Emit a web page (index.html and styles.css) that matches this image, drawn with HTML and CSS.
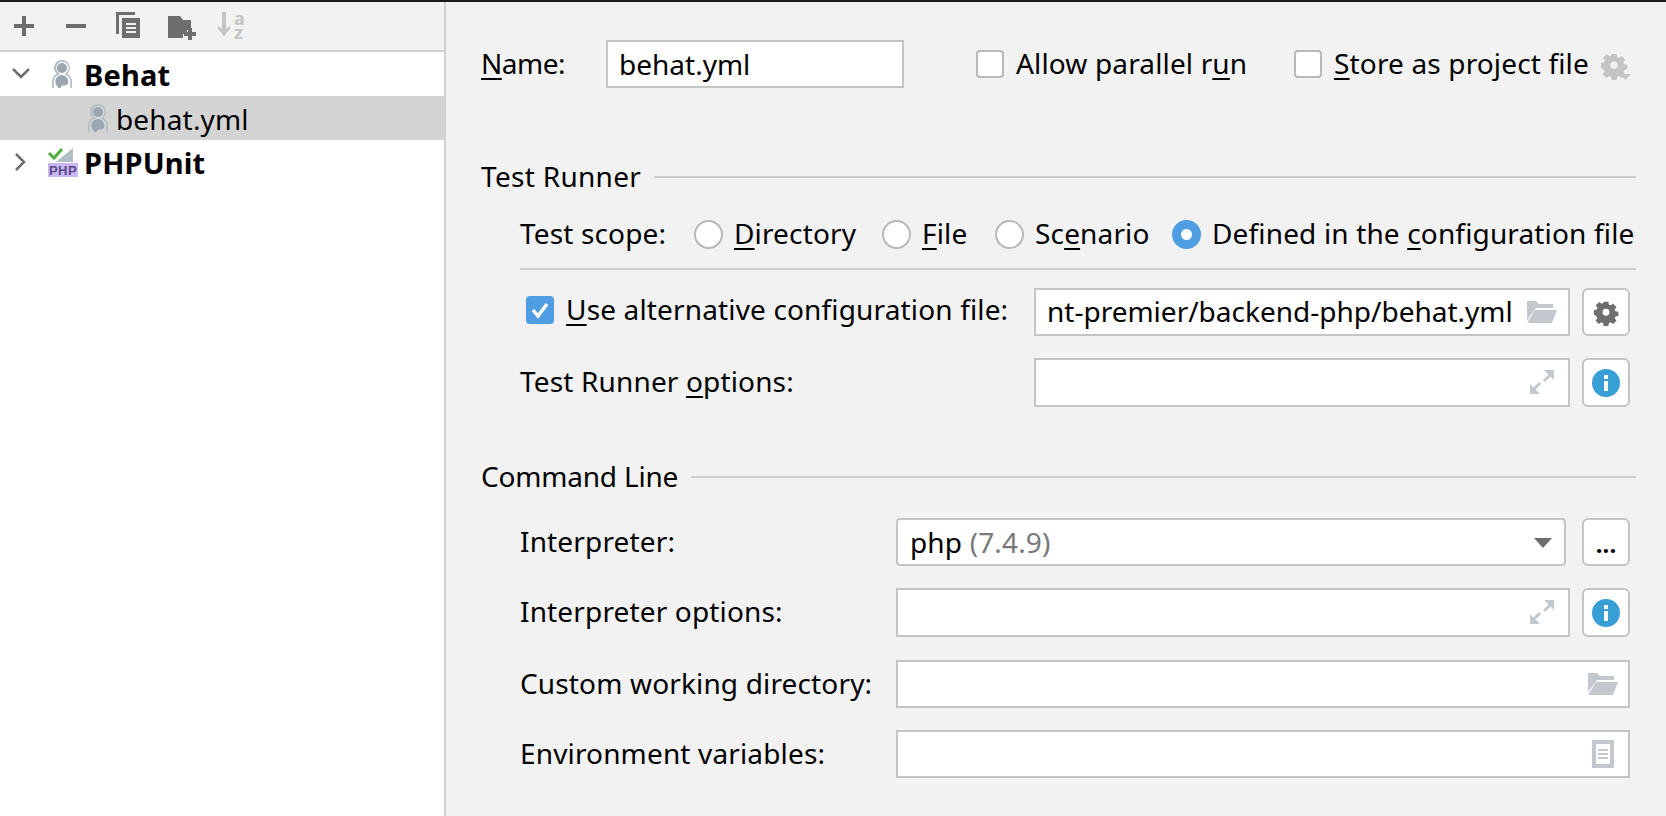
FILE: index.html
```html
<!DOCTYPE html>
<html lang="en">
<head>
    <meta charset="UTF-8">
    <meta name="viewport" content="width=device-width, initial-scale=1.0">
    <title>Run Configurations</title>
    <link rel="stylesheet" href="styles.css">
</head>
<body>
<svg class="defs" width="0" height="0">
    <symbol id="behat" viewBox="0 0 20 28">
        <path d="M10 0a8 8 0 0 1 5.500 13.800A10 10 0 0 1 20 22v6h-1.800v-6a8.200 8.200 0 0 0-5.200-7.600l1.200-1.500A6.200 6.200 0 1 0 7 13.100l1 1.200A8.200 8.200 0 0 0 1.800 22v6H0v-6a10 10 0 0 1 4.500-8.200A8 8 0 0 1 10 0z" fill="#b4bfc6"/>
        <circle cx="10" cy="8" r="5" fill="#9aa7b0"/>
        <path d="M6.500 28l-1-1.500A6.500 6.500 0 1 1 15.800 24c-1.500 1.300-3 1.500-4.500 1.600-1.400.1-2.300.7-2.600 2.400z" fill="#9aa7b0"/>
    </symbol>
    <symbol id="folder" viewBox="0 0 30 22">
        <path d="M0 0h9l3 3h14v4H9L0 19z" fill="#c2c8cd"/>
        <path d="M8 9h22l-5 13H0z" fill="#c2c8cd"/>
    </symbol>
    <symbol id="expand" viewBox="0 0 24 24">
        <path d="M14 0h10v10l-3.500-3.500-5.500 5.500-2-2 5.500-5.500zM0 24V14l3.500 3.500L9 12l2 2-5.500 5.500L10 24z" fill="#c2c8cd"/>
    </symbol>
    <symbol id="info" viewBox="0 0 28 28">
        <circle cx="14" cy="14" r="14" fill="#389fd6"/>
        <rect x="12" y="6" width="4" height="4" fill="#fff"/>
        <rect x="12" y="12" width="4" height="10" fill="#fff"/>
    </symbol>
    <symbol id="gear" viewBox="0 0 24 24">
        <path d="M9.500 1h5l.7 3.200 1.700.7 2.800-1.800 3.500 3.500-1.800 2.800.7 1.700 3.200.7v4.400l-3.200.7-.7 1.700 1.800 2.800-3.500 3.500-2.800-1.800-1.700.7-.7 3.200h-5l-.7-3.200-1.700-.7-2.800 1.800-3.500-3.500 1.800-2.800-.7-1.700L-1 14.400V10l3.200-.7.700-1.700-1.800-2.800 3.500-3.500 2.800 1.800 1.700-.7zM12 8.500a3.700 3.700 0 1 0 0 7.400 3.700 3.700 0 0 0 0-7.400z" transform="translate(2.400 2.400) scale(.8)" fill-rule="evenodd"/>
    </symbol>
</svg>

<div class="window">
    <div class="sidebar">
        <div class="toolbar">
            <svg class="tool" width="32" height="32" viewBox="0 0 32 32"><path d="M14 6h4v8h8v4h-8v8h-4v-8H6v-4h8z" fill="#6e6e6e"/></svg>
            <svg class="tool" width="32" height="32" viewBox="0 0 32 32"><rect x="6" y="14" width="20" height="4" fill="#6e6e6e"/></svg>
            <svg class="tool" width="32" height="32" viewBox="0 0 32 32"><path d="M4 2h19v3H7v19H4z M10 8h18v20H10z" fill="#6e6e6e"/><path d="M14 13h10v2H14zM14 17h10v2H14zM14 21h10v2H14z" fill="#f2f2f2"/></svg>
            <svg class="tool tool-folder" width="32" height="32" viewBox="0 0 32 32"><path d="M2 6h12l3 4h8v10h-4v4h-4v4H2z" fill="#6e6e6e"/><path d="M22 21h4v4h4v4h-4v4h-4v-4h-4v-4h4z" fill="#6e6e6e" transform="translate(0 -3)"/></svg>
            <div class="sort-icon">
                <svg width="18" height="26" viewBox="0 0 18 26"><path d="M7 0h4v17l4-3v3l-6 7-6-7v-3l4 3z" fill="#c4c4c4"/></svg>
                <div class="sort-letters"><span>a</span><span>z</span></div>
            </div>
        </div>
        <div class="tree">
            <div class="tree-row">
                <svg class="chevron" width="20" height="12" viewBox="0 0 20 12"><path d="M2 2l8 8 8-8" fill="none" stroke="#6e6e6e" stroke-width="2.500"/></svg>
                <svg class="tree-icon" width="20" height="28"><use href="#behat"/></svg>
                <b>Behat</b>
            </div>
            <div class="tree-row selected">
                <svg class="tree-icon file-icon" width="20" height="28"><use href="#behat"/></svg>
                <span>behat.yml</span>
            </div>
            <div class="tree-row">
                <svg class="chevron right" width="12" height="20" viewBox="0 0 12 20"><path d="M2 2l8 8-8 8" fill="none" stroke="#6e6e6e" stroke-width="2.500"/></svg>
                <svg class="php-icon" width="32" height="34" viewBox="0 0 32 34">
                    <path d="M26 3v14H9z" fill="#b0bec5"/>
                    <path d="M2 8l5 5 8-9" fill="none" stroke="#4fb03a" stroke-width="3"/>
                    <rect x="1" y="18" width="30" height="14" fill="#c9b8f0"/>
                    <text x="16" y="30" class="php-text">PHP</text>
                </svg>
                <b>PHPUnit</b>
            </div>
        </div>
    </div>

    <div class="main">
        <div class="name-row">
            <label class="name-label"><u>N</u>ame:</label>
            <div class="field name-field">behat.yml</div>
            <span class="check check-parallel"><i class="box"></i><span>Allow parallel r<u>u</u>n</span></span>
            <span class="check check-store"><i class="box"></i><span><u>S</u>tore as project file</span></span>
            <svg class="store-gear" width="30" height="31" viewBox="0 0 30 31">
                <svg x="-2" width="30" height="30" fill="#c4c4c4"><use href="#gear"/></svg>
                <path d="M19 24h11l-5.500 6z" fill="#c4c4c4"/>
            </svg>
        </div>

        <div class="group-title title-runner"><span>Test Runner</span><i></i></div>

        <div class="scope-row">
            <span class="scope-label">Test scope:</span>
            <span class="radio r-dir"><i></i><span><u>D</u>irectory</span></span>
            <span class="radio r-file"><i></i><span><u>F</u>ile</span></span>
            <span class="radio r-scen"><i></i><span>Sc<u>e</u>nario</span></span>
            <span class="radio on"><i></i><span>Defined in the <u>c</u>onfiguration file</span></span>
        </div>
        <div class="separator"></div>

        <div class="form-row row-alt">
            <span class="check alt-check"><i class="box checked"><svg width="20" height="20" viewBox="0 0 20 20"><path d="M3 10l5 6 9-12" fill="none" stroke="#fff" stroke-width="3.500"/></svg></i><span><u>U</u>se alternative configuration file:</span></span>
            <div class="field grow clip"><span class="clip-text">nt-premier/backend-php/behat.yml</span><svg class="inner-icon folder-alt" width="30" height="22"><use href="#folder"/></svg></div>
            <div class="side-btn"><svg width="28" height="28" fill="#6e6e6e"><use href="#gear"/></svg></div>
        </div>
        <div class="form-row row-tall">
            <span class="label wide">Test Runner <u>o</u>ptions:</span>
            <div class="field grow"><svg class="inner-icon expand-icon" width="24" height="24"><use href="#expand"/></svg></div>
            <div class="side-btn"><svg width="28" height="28"><use href="#info"/></svg></div>
        </div>

        <div class="group-title title-command"><span>Command Line</span><i></i></div>

        <div class="form-row row-interp">
            <span class="label">Interpreter:</span>
            <div class="combo">php <span class="muted">(7.4.9)</span><i class="arrow"></i></div>
            <div class="side-btn dots">...</div>
        </div>
        <div class="form-row row-tall">
            <span class="label">Interpreter options:</span>
            <div class="field grow"><svg class="inner-icon expand-icon" width="24" height="24"><use href="#expand"/></svg></div>
            <div class="side-btn"><svg width="28" height="28"><use href="#info"/></svg></div>
        </div>
        <div class="form-row row-interp">
            <span class="label">Custom working directory:</span>
            <div class="field grow"><svg class="inner-icon folder-right" width="30" height="22"><use href="#folder"/></svg></div>
        </div>
        <div class="form-row row-env">
            <span class="label">Environment variables:</span>
            <div class="field grow">
                <svg class="inner-icon env-icon" width="22" height="28" viewBox="0 0 22 28"><path d="M0 0h22v28H0zM4 4v20h14V4z" fill="#c2c8cd" fill-rule="evenodd"/><path d="M6 9h10v2H6zM6 13h10v2H6zM6 17h10v2H6z" fill="#c2c8cd"/></svg>
            </div>
        </div>
    </div>
</div>
</body>
</html>
```

FILE: styles.css
```css
body {
    margin: 0;
    font-family: "Noto Sans", sans-serif;
    font-size: 28px;
    line-height: 36px;
    letter-spacing: 0.15px;
    color: #000;
    background: #f2f2f2;
    overflow: hidden;
}
u {
    text-decoration-thickness: 2px;
    text-underline-offset: 4px;
}
.defs {
    position: absolute;
}
.window {
    display: flex;
    height: 814px;
    border-top: 2px solid #1a1a1a;
}

/* left tree */
.sidebar {
    width: 444px;
    flex: none;
    background: #fff;
    border-right: 2px solid #d1d1d1;
}
.toolbar {
    display: flex;
    align-items: center;
    height: 48px;
    padding-left: 8px;
    gap: 20px;
    background: #f2f2f2;
    border-bottom: 2px solid #d1d1d1;
}
.tool {
    flex: none;
}
.tool-folder {
    margin-left: 2px;
    margin-right: -2px;
}
.sort-icon {
    display: flex;
    align-items: flex-start;
    height: 28px;
    margin-left: -1px;
    gap: 1px;
}
.sort-letters {
    display: flex;
    flex-direction: column;
    margin-top: -1px;
    font-size: 18px;
    font-weight: 700;
    line-height: 14px;
    color: #c4c4c4;
}
.tree-row {
    display: flex;
    align-items: center;
    height: 44px;
    padding-left: 52px;
    position: relative;
}
.tree-row b {
    margin: 2px 0 0 12px;
    font-size: 29px;
}
.tree-row.selected {
    background: #d4d4d4;
    padding-left: 88px;
}
.tree-row.selected span {
    margin: 1px 0 0 8px;
}
.chevron {
    position: absolute;
    left: 11px;
    top: 15px;
}
.chevron.right {
    left: 14px;
    top: 12px;
}
.php-icon {
    margin-left: -5px;
    margin-right: -7px;
}
.php-text {
    font-family: "Liberation Sans", sans-serif;
    font-size: 13px;
    font-weight: 700;
    letter-spacing: 0.5px;
    text-anchor: middle;
    fill: #5b4a8a;
}

/* right form */
.main {
    flex: 1;
    padding: 38px 30px 0 35px;
}
.name-row {
    display: flex;
    align-items: center;
    height: 48px;
}
.name-label {
    width: 125px;
    flex: none;
    margin-top: -3px;
    letter-spacing: -0.5px;
}
.field {
    display: flex;
    align-items: center;
    box-sizing: border-box;
    height: 100%;
    background: #fff;
    border: 2px solid #c4c4c4;
    position: relative;
}
.name-field {
    width: 298px;
    flex: none;
    padding-left: 11px;
    letter-spacing: 0;
}
.check {
    display: flex;
    align-items: center;
    flex: none;
    white-space: nowrap;
}
.check > span {
    margin-top: -3px;
}
.box {
    display: flex;
    align-items: center;
    justify-content: center;
    box-sizing: border-box;
    width: 28px;
    height: 28px;
    margin-right: 12px;
    flex: none;
    background: #fff;
    border: 2px solid #b8b8b8;
    border-radius: 4px;
}
.box.checked {
    background: #4f9ee3;
    border: none;
}
.check-parallel {
    margin-left: 72px;
    width: 318px;
}
.check-store {
    width: 307px;
}
.store-gear {
    flex: none;
    margin-top: 2px;
}
.group-title {
    display: flex;
    align-items: center;
    height: 36px;
}
.group-title span {
    margin-top: -3px;
}
.group-title i {
    flex: 1;
    height: 2px;
    margin-left: 13px;
    background: #cdcdcd;
}
.title-runner {
    margin-top: 71px;
    letter-spacing: 0.3px;
}
.title-command {
    margin-top: 52px;
    letter-spacing: -0.2px;
}
.scope-row {
    display: flex;
    align-items: center;
    height: 30px;
    margin: 24px 0 0 39px;
    white-space: nowrap;
}
.scope-label {
    width: 174px;
    flex: none;
    margin-top: -3px;
}
.radio {
    display: flex;
    align-items: center;
    flex: none;
}
.radio > span {
    margin-top: -3px;
}
.radio i {
    box-sizing: border-box;
    width: 29px;
    height: 29px;
    margin-right: 11px;
    flex: none;
    background: #fff;
    border: 2px solid #b8b8b8;
    border-radius: 50%;
}
.radio.on i {
    background: #fff;
    border: 9.500px solid #4f9ee3;
}
.r-dir { width: 188px; }
.r-file { width: 113px; }
.r-scen { width: 177px; }
.separator {
    height: 2px;
    margin: 19px 0 0 39px;
    background: #cdcdcd;
}
.form-row {
    display: flex;
    align-items: center;
    margin-left: 39px;
    margin-right: 6px;
    margin-top: 22px;
}
.row-alt {
    height: 48px;
    margin-top: 18px;
}
.row-tall {
    height: 49px;
}
.row-interp {
    height: 48px;
    margin-top: 23px;
}
.row-env {
    height: 48px;
}
.alt-check {
    width: 514px;
    padding: 0 0 4px 6px;
    box-sizing: border-box;
}
.label {
    width: 376px;
    flex: none;
    white-space: nowrap;
    margin-top: -3px;
}
.label.wide {
    width: 514px;
}
.grow {
    flex: 1;
    min-width: 0;
}
.clip {
    overflow: hidden;
}
.clip-text {
    padding-left: 11px;
    margin-top: -2px;
    white-space: nowrap;
    letter-spacing: 0;
}
.inner-icon {
    position: absolute;
    right: 12px;
    top: 10px;
}
.expand-icon {
    right: 14px;
}
.folder-alt {
    top: 11px;
    right: 11px;
}
.folder-right {
    top: 11px;
    right: 10px;
}
.env-icon {
    right: 14px;
    top: 8px;
}
.side-btn {
    display: flex;
    align-items: center;
    justify-content: center;
    box-sizing: border-box;
    width: 48px;
    height: 100%;
    margin-left: 12px;
    flex: none;
    background: #fff;
    border: 2px solid #c4c4c4;
    border-radius: 6px;
}
.dots {
    align-items: flex-end;
    padding-bottom: 8px;
    font-size: 24px;
    font-weight: 700;
    line-height: 1;
}
.combo {
    display: flex;
    align-items: center;
    box-sizing: border-box;
    flex: 1;
    height: 100%;
    margin-right: 4px;
    padding-left: 12px;
    background: #fff;
    border: 2px solid #c4c4c4;
    border-radius: 4px;
    position: relative;
    white-space: pre;
}
.muted {
    color: #787878;
}
.arrow {
    position: absolute;
    right: 12px;
    top: 18px;
    border-left: 9px solid transparent;
    border-right: 9px solid transparent;
    border-top: 10px solid #6e6e6e;
}
```
